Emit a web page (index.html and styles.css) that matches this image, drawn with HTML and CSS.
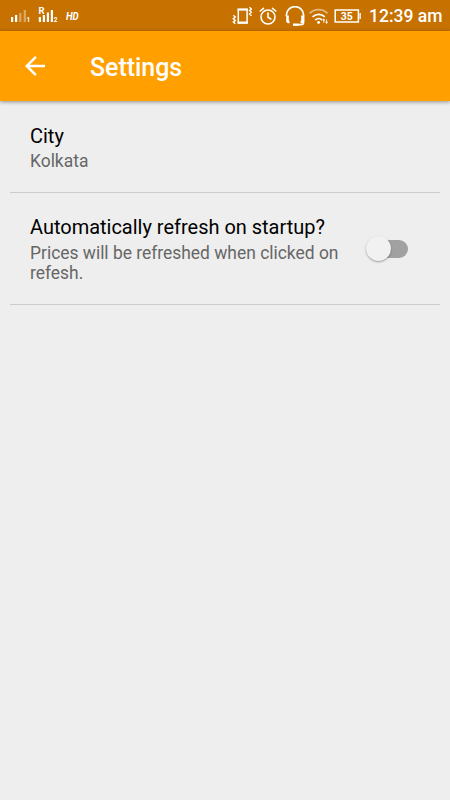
FILE: index.html
```html
<!DOCTYPE html>
<html lang="en">
<head>
<meta charset="utf-8">
<title>Settings</title>
<link rel="stylesheet" href="styles.css">
</head>
<body>
<div class="status-bar">
  <svg class="signals" width="64" height="31" viewBox="0 0 64 31">
    <g fill="#fff">
      <path d="M11 17h2.200v5H11zM15 15h2.200v7H15z"/>
      <path d="M19.200 13h2.200v9h-2.200zM23.700 10h2.200v12h-2.200z" opacity=".4"/>
      <path d="M38.800 17H41v5h-2.200zM42.800 15H45v7h-2.200zM46.800 12.500H49v9.500h-2.200zM50.800 10H53v12h-2.200z"/>
      <text class="sim" x="26.400" y="22">1</text>
      <text class="sim" x="53.700" y="22">2</text>
      <text class="roam" x="38.600" y="14">R</text>
    </g>
  </svg>
  <span class="hd">HD</span>
  <div class="status-icons">
    <svg width="20" height="20" viewBox="0 0 20 20" fill="none" stroke="#fff">
      <path d="M6.300 3.500h8.800v13.200H6.300z" stroke-width="1.500"/>
      <path d="M5.600 3.500h10.200M5.600 16.700h10.200" stroke-width="2.200"/>
      <path d="M1.300 9.300l2 1.700-2 1.700 2 1.700-2 1.700 2 1.700M17.500 1.200l2 1.700-2 1.700 2 1.700-2 1.700 2 1.700" stroke-width="1.400"/>
    </svg>
    <svg class="alarm" width="18" height="20" viewBox="0 0 18 20" fill="none" stroke="#fff" stroke-width="1.600" stroke-linecap="round">
      <circle cx="9" cy="11" r="7"/>
      <path d="M9 7v4.300l2.800 1.700M1.200 5l3.300-2.700M16.800 5l-3.300-2.700"/>
    </svg>
    <svg class="headset" width="20" height="20" viewBox="0 0 20 20" fill="none" stroke="#fff" stroke-width="1.700">
      <path d="M1.400 10V9a8.600 8.300 0 0 1 17.200 0v7q0 2.700-2.700 2.700H13"/>
      <path d="M2.500 9.500v5.500q0 1 2 1M17.500 9.500v5.500q0 1-2 1" stroke-width="2.600"/>
      <path d="M8 18.700h5.500" stroke-width="2.400"/>
    </svg>
    <svg class="wifi" width="20" height="20" viewBox="0 0 20 20" fill="none" stroke="#fff" stroke-width="1.800">
      <path d="M.7 7.300a12.800 12.800 0 0 1 17.800 0" opacity=".5"/>
      <path d="M3.600 10.800a9 9 0 0 1 12.200 0M6.300 14a5 5 0 0 1 6.800 0"/>
      <circle cx="9.600" cy="16.500" r="1.400" fill="#fff" stroke="none"/>
      <path d="M14.800 13v4M17.600 13.500v4" stroke-width=".8"/>
      <path d="M13.300 14.500l1.500-2 1.500 2zM16.100 15.800l1.500 2 1.500-2z" fill="#fff" stroke="none"/>
    </svg>
    <div class="battery">
      <svg width="28" height="16" viewBox="0 0 28 16">
        <path d="M1.200 2h23.200v12H1.200z" fill="none" stroke="#fff" stroke-width="1.500"/>
        <path d="M25.500 5h1.300v6h-1.300z" fill="#fff"/>
        <text x="12.800" y="11.800" fill="#fff" text-anchor="middle">35</text>
      </svg>
    </div>
  </div>
  <time class="clock">12:39 am</time>
</div>
<header class="app-bar">
  <svg class="back" width="30" height="30" viewBox="0 0 24 24" fill="#fff"><path d="M20 11H7.830l5.590-5.590L12 4l-8 8 8 8 1.410-1.410L7.830 13H20v-2z"/></svg>
  <h1>Settings</h1>
</header>
<main class="preferences">
  <section class="preference city">
    <div class="copy"><h2>City</h2><p>Kolkata</p></div>
  </section>
  <section class="preference refresh">
    <div class="copy"><h2>Automatically refresh on startup?</h2><p>Prices will be refreshed when clicked on refesh.</p></div>
    <div class="switch"><div class="thumb"></div></div>
  </section>
</main>
</body>
</html>
```
FILE: styles.css
```css
* { box-sizing: border-box; }
body {
  margin: 0;
  min-height: 800px;
  background: #eee;
  font-family: Roboto, sans-serif;
  overflow: hidden;
}
h1, h2, p { margin: 0; }
svg { display: block; flex: none; }
.status-bar {
  display: flex;
  align-items: center;
  height: 31px;
  background: #c67100;
  color: #fff;
}
.sim { font: 700 6.500px Roboto, sans-serif; }
.roam { font: 700 9.500px Roboto, sans-serif; }
.hd {
  width: 20px;
  margin-left: 2px;
  font: italic 700 11.500px/12px Roboto, sans-serif;
  transform: scaleX(.84);
  transform-origin: left;
}
.status-icons {
  display: flex;
  align-items: center;
  margin-left: 146px;
}
.alarm { margin-left: 7px; }
.headset { margin-left: 8px; }
.wifi { margin-left: 4px; }
.battery {
  width: 28px;
  margin-left: 5px;
  font-size: 10.500px;
  font-weight: 700;
}
.clock {
  margin: 1px 0 0 7px;
  font-size: 17.500px;
  font-weight: 500;
  line-height: 22px;
  white-space: nowrap;
}
.app-bar {
  display: flex;
  align-items: center;
  height: 70px;
  padding-left: 20px;
  background: #ffa000;
  color: #fff;
  box-shadow: 0 1px 4px rgba(0, 0, 0, .4);
}
.app-bar h1 {
  margin: 4px 0 0 40px;
  font-size: 24.900px;
  font-weight: 500;
  line-height: 30px;
}
.preferences { padding: 0 10px; }
.preference {
  display: flex;
  padding: 0 32px 0 20px;
  border-bottom: 1px solid #ccc;
}
.city { height: 92px; padding-top: 23px; }
.refresh { height: 112px; padding-top: 22px; }
.refresh .copy p { margin-top: 4px; }
.copy { width: 316px; flex: none; }
.copy h2 {
  font-size: 19.980px;
  font-weight: 400;
  line-height: 24px;
  color: #000;
}
.copy p {
  margin-top: 3px;
  font-size: 17.430px;
  line-height: 20px;
  color: #666;
}
.switch {
  flex: none;
  width: 38px;
  height: 18px;
  margin: 25px 0 0 24px;
  border-radius: 9px;
  background: #a1a1a1;
}
.thumb {
  width: 25px;
  height: 25px;
  border-radius: 50%;
  background: #f1f1f1;
  box-shadow: 0 1px 2px rgba(0, 0, 0, .35);
  transform: translate(-4px, -4px);
}
```
